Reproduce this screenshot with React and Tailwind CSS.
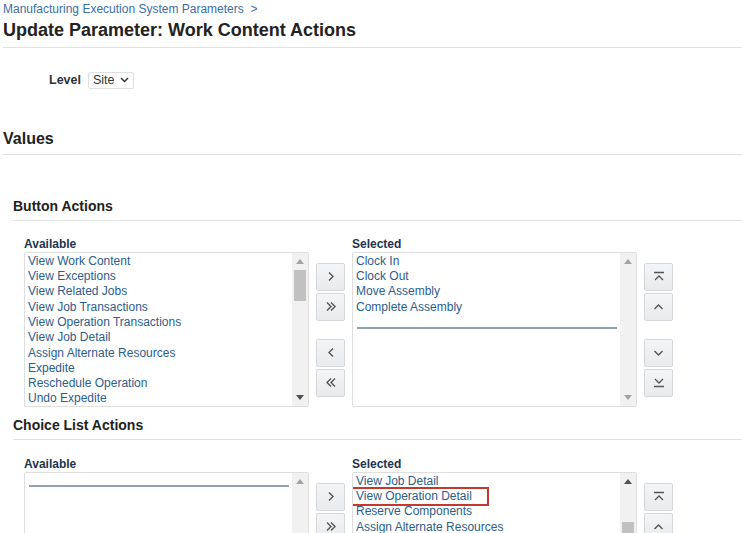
import React from "react";

const font = { fontFamily: '"Liberation Sans", Arial, sans-serif' };

function Chev({ dir = "right", double = false }) {
  const single = {
    right: "M4 1.5 L8 5.5 L4 9.5",
    left: "M8 1.5 L4 5.5 L8 9.5",
    up: "M1.5 8 L5.5 4 L9.5 8",
    down: "M1.5 4 L5.5 8 L9.5 4",
  };
  if (double) {
    const d =
      dir === "right"
        ? "M2 1.5 L6 5.5 L2 9.5 M6 1.5 L10 5.5 L6 9.5"
        : "M6 1.5 L2 5.5 L6 9.5 M10 1.5 L6 5.5 L10 9.5";
    return (
      <svg width="12" height="11" viewBox="0 0 12 11">
        <path d={d} fill="none" stroke="#555" strokeWidth="1.4" />
      </svg>
    );
  }
  if (dir === "top" || dir === "bottom") {
    const d =
      dir === "top"
        ? "M1 1.5 H11 M2 9 L6 5 L10 9"
        : "M1 9.5 H11 M2 2 L6 6 L10 2";
    return (
      <svg width="12" height="11" viewBox="0 0 12 11">
        <path d={d} fill="none" stroke="#555" strokeWidth="1.3" />
      </svg>
    );
  }
  return (
    <svg width="11" height="11" viewBox="0 0 11 11">
      <path d={single[dir]} fill="none" stroke="#555" strokeWidth="1.4" />
    </svg>
  );
}

function Btn({ children }) {
  return (
    <div className="w-[29px] h-[28px] flex items-center justify-center rounded-[2px] border border-[#d5d9dd] bg-gradient-to-b from-[#f4f5f6] to-[#e8eaec]">
      {children}
    </div>
  );
}

function Scrollbar({ upDark, downDark, thumb, thumbTop = 17, thumbH = 31 }) {
  return (
    <div className="relative w-[16px] h-full bg-[#f1f1f1]">
      <div className="flex justify-center pt-[6px]">
        <svg width="8" height="5" viewBox="0 0 8 5">
          <path d="M0 5 L4 0 L8 5 Z" fill={upDark ? "#505050" : "#a3a3a3"} />
        </svg>
      </div>
      {thumb && (
        <div
          className="absolute left-[2px] w-[12px] bg-[#c1c1c1]"
          style={{ top: thumbTop, height: thumbH }}
        />
      )}
      <div className="absolute bottom-[6px] left-0 w-full flex justify-center">
        <svg width="8" height="5" viewBox="0 0 8 5">
          <path d="M0 0 L8 0 L4 5 Z" fill={downDark ? "#505050" : "#a3a3a3"} />
        </svg>
      </div>
    </div>
  );
}

function ListBox({ items = [], line, lineTop, sb, highlight, h = 155 }) {
  return (
    <div
      className="w-[285px] flex border border-[#dedede] rounded-[2px] bg-white overflow-hidden"
      style={{ height: h }}
    >
      <div className="flex-1 pl-[3px] pr-[2px] pt-[1px]">
        {items.map((it) => (
          <div
            key={it}
            className={
              "text-[12px] leading-[15.3px] text-[#2c5d8d] whitespace-nowrap " +
              (highlight === it ? "outline-2 outline-[#c8372d] -ml-[5px] pl-[5px] w-[136px] relative" : "")
            }
          >
            {it}
          </div>
        ))}
        {line && (
          <div
            className="h-[2px] bg-[#8ea3b5] mr-[1px] ml-[1px]"
            style={{ marginTop: lineTop }}
          />
        )}
      </div>
      <Scrollbar {...sb} />
    </div>
  );
}

function Shuttle({ avail, sel, availLine, availLineTop, selLine, selLineTop, availSb, selSb, highlight, h }) {
  return (
    <div className="flex pl-[24px]">
      <div>
        <div className="text-[12px] font-bold text-[#1d3550] leading-[14px] h-[15px]">Available</div>
        <ListBox items={avail} line={availLine} lineTop={availLineTop} sb={availSb} h={h} />
      </div>
      <div className="flex flex-col gap-[2px] mx-[7px] mt-[26px]">
        <Btn><Chev dir="right" /></Btn>
        <Btn><Chev dir="right" double /></Btn>
        <div className="h-[14px]" />
        <Btn><Chev dir="left" /></Btn>
        <Btn><Chev dir="left" double /></Btn>
      </div>
      <div>
        <div className="text-[12px] font-bold text-[#1d3550] leading-[14px] h-[15px]">Selected</div>
        <ListBox items={sel} line={selLine} lineTop={selLineTop} sb={selSb} highlight={highlight} h={h} />
      </div>
      <div className="flex flex-col gap-[2px] ml-[7px] mt-[26px]">
        <Btn><Chev dir="top" /></Btn>
        <Btn><Chev dir="up" /></Btn>
        <div className="h-[14px]" />
        <Btn><Chev dir="down" /></Btn>
        <Btn><Chev dir="bottom" /></Btn>
      </div>
    </div>
  );
}

export default function App() {
  return (
    <div className="w-[742px] h-[533px] overflow-hidden bg-white text-[#262626]" style={font}>
      <div className="pl-[3px] pt-[1px]">
        <div className="text-[12px] leading-[16px] text-[#3c6ea5]">
          Manufacturing Execution System Parameters&nbsp;&nbsp;&gt;
        </div>
        <div className="text-[18px] leading-[22px] font-bold text-[#222] mt-[2px]">
          Update Parameter: Work Content Actions
        </div>
        <div className="mt-[6px] border-b border-[#dfe2e5]" />
      </div>

      <div className="flex items-center mt-[23px] pl-[49px]">
        <span className="text-[12.5px] font-bold text-[#333]">Level</span>
        <div className="ml-[7px] h-[17px] px-[4px] flex items-center gap-[5px] border border-[#e0e0e0] rounded-[2px] text-[12.5px] text-[#333]">
          Site
          <svg width="9" height="6" viewBox="0 0 9 6">
            <path d="M1 1 L4.5 4.5 L8 1" fill="none" stroke="#333" strokeWidth="1.5" />
          </svg>
        </div>
      </div>

      <div className="pl-[3px] mt-[39px]">
        <div className="text-[16px] leading-[20px] font-bold text-[#222]">Values</div>
        <div className="mt-[5px] border-b border-[#dfe2e5]" />
      </div>

      <div className="pl-[13px] mt-[42px]">
        <div className="text-[14px] leading-[18px] font-bold text-[#222]">Button Actions</div>
        <div className="mt-[5px] border-b border-[#dfe2e5]" />
      </div>

      <div className="mt-[16px]">
        <Shuttle
          avail={[
            "View Work Content",
            "View Exceptions",
            "View Related Jobs",
            "View Job Transactions",
            "View Operation Transactions",
            "View Job Detail",
            "Assign Alternate Resources",
            "Expedite",
            "Reschedule Operation",
            "Undo Expedite",
          ]}
          sel={["Clock In", "Clock Out", "Move Assembly", "Complete Assembly"]}
          selLine
          selLineTop={12}
          availSb={{ downDark: true, thumb: true }}
          selSb={{}}
          h={155}
        />
      </div>

      <div className="pl-[13px] mt-[9px]">
        <div className="text-[14px] leading-[18px] font-bold text-[#222]">Choice List Actions</div>
        <div className="mt-[5px] border-b border-[#dfe2e5]" />
      </div>

      <div className="mt-[17px]">
        <Shuttle
          avail={[]}
          availLine
          availLineTop={11}
          sel={["View Job Detail", "View Operation Detail", "Reserve Components", "Assign Alternate Resources"]}
          highlight="View Operation Detail"
          availSb={{}}
          selSb={{ upDark: true, thumb: true, thumbTop: 49, thumbH: 40 }}
          h={155}
        />
      </div>
    </div>
  );
}
